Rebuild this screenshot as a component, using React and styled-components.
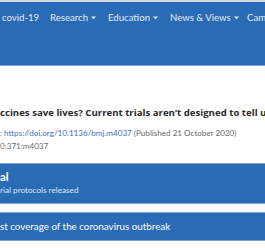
import React from 'react';
import styled, {createGlobalStyle} from 'styled-components';

const Global = createGlobalStyle`
  html, body { margin: 0; padding: 0; background: #fff; overflow: hidden; }
  body { width: 265px; height: 250px; }
`;

const Page = styled.div`
  width: 265px;
  height: 250px;
  overflow: hidden;
  border-top: 2px solid #d6d9de;
  box-sizing: border-box;
`;

const NavBar = styled.nav`
  height: 64px;
  background: #2a6bb6;
  border-bottom: 1px solid #7ea5d8;
  display: flex;
  align-items: flex-start;
  padding: 10px 0 0 2px;
  box-sizing: border-box;
  white-space: nowrap;
  overflow: hidden;
`;

const NavItem = styled.span`
  font-family: Lato, "Liberation Sans", sans-serif;
  font-size: 9.6px;
  color: #e3ebf7;
  width: ${p => p.w}px;
  flex: none;
  display: inline-flex;
  align-items: center;
  gap: 3px;
`;

const Chevron = () => (
  <svg width="5" height="4" viewBox="0 0 5 4">
    <path d="M0 0.5 H5 L2.5 3.3 Z" fill="#e3ebf7"/>
  </svg>
);

const Article = styled.section`
  padding: 40px 0 0 0;
  white-space: nowrap;
  overflow: hidden;
`;

const Title = styled.h1`
  margin: 0;
  font-family: "Open Sans", "Liberation Sans", sans-serif;
  font-weight: 700;
  font-size: 9.65px;
  color: #2b2b2b;
  line-height: 14px;
`;

const Meta = styled.div`
  margin-top: 7px;
  font-family: Lato, "Liberation Sans", sans-serif;
  font-size: 8.1px;
  line-height: 13px;
  color: #6b6b6b;
`;

const Link = styled.a`
  color: #3d74b9;
  text-decoration: none;
`;

const Banner = styled.div`
  background: #2a6bb6;
  border-top: 1px solid #7ea5d8;
  border-bottom: 1px solid #7ea5d8;
  color: #fff;
  font-family: Lato, "Liberation Sans", sans-serif;
  white-space: nowrap;
  overflow: hidden;
  margin-top: ${p => p.top}px;
  height: ${p => p.h}px;
  box-sizing: border-box;
  padding: ${p => p.pad};
`;

const BannerHead = styled.div`
  font-weight: 700;
  font-size: 11.5px;
  line-height: 14px;
`;

const BannerSub = styled.div`
  font-size: 8.2px;
  line-height: 12px;
  color: #dfe8f5;
`;

const BannerLine = styled.div`
  font-size: 9.8px;
  line-height: 14px;
`;

const Tabs = styled.div`
  display: flex;
  gap: 3px;
  margin-top: 13px;
`;

const Tab = styled.div`
  width: ${p => p.w}px;
  height: 10px;
  border: 1px solid #dadde2;
  border-radius: 2px;
  box-sizing: border-box;
`;

export default function App() {
  return (
    <>
      <Global/>
      <Page>
        <NavBar>
          <NavItem w={48}>covid-19</NavItem>
          <NavItem w={58}>Research <Chevron/></NavItem>
          <NavItem w={62}>Education <Chevron/></NavItem>
          <NavItem w={77}>News &amp; Views <Chevron/></NavItem>
          <NavItem w={60}>Campaigns</NavItem>
        </NavBar>
        <Article>
          <Title>ccines save lives? Current trials aren’t designed to tell us</Title>
          <Meta>
            : <Link>https://doi.org/10.1136/bmj.m4037</Link> (Published 21 October 2020)
            <br/>0:371:m4037
          </Meta>
        </Article>
        <Banner top={10} h={41} pad="6px 0 0 0">
          <BannerHead>al</BannerHead>
          <BannerSub>rial protocols released</BannerSub>
        </Banner>
        <Banner top={8} h={29} pad="6px 0 0 0">
          <BannerLine>st coverage of the coronavirus outbreak</BannerLine>
        </Banner>
        <Tabs>
          <Tab w={50}/>
          <Tab w={44}/>
          <Tab w={58}/>
        </Tabs>
      </Page>
    </>
  );
}
